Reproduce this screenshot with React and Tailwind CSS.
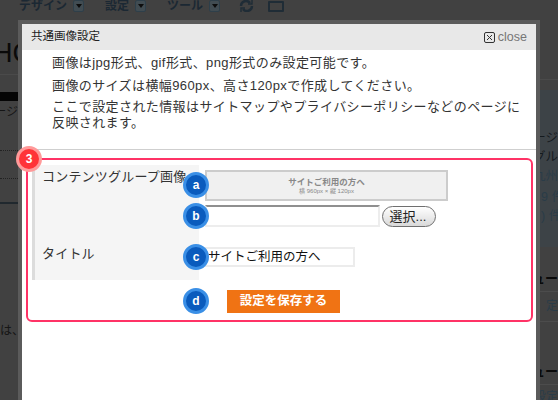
import React from "react";

const jp = `font-['Liberation_Sans','Noto_Sans_CJK_JP',sans-serif]`;

function Badge({ label, className }) {
  return (
    <span className={`absolute left-[155px] flex h-[26px] w-[26px] items-center justify-center rounded-full border-[3px] border-[#3a8fe6] bg-[#0a5bbd] text-[12px] font-bold text-white ${className}`}>
      {label}
    </span>
  );
}

function Menu({ label, className }) {
  return (
    <div className={`flex items-center ${className}`}>
      <span className="text-[12px] font-bold leading-none text-[#1b2833]">{label}</span>
      <span className="ml-[6px] flex h-[12px] w-[11px] items-center justify-center rounded-[2px] border border-[#2e3f4a] bg-[#414c52]">
        <svg width="6" height="4" viewBox="0 0 6 4"><path d="M0 0h6L3 4z" fill="#0d0d0d" /></svg>
      </span>
    </div>
  );
}

function RightLine({ children, className = "" }) {
  return <div className={`flex justify-end whitespace-nowrap ${className}`}>{children}</div>;
}

export default function App() {
  return (
    <div className={`relative h-[400px] w-[558px] overflow-hidden bg-[#414141] ${jp}`}>
      {/* dimmed page behind the dialog */}
      <div className="flex h-[12px] items-center pl-[19px]">
        <Menu label="デザイン" />
        <Menu label="設定" className="ml-[21px]" />
        <Menu label="ツール" className="ml-[21px]" />
        <svg className="ml-[19px]" width="15" height="12" viewBox="0 0 15 12" fill="none" stroke="#1f2c36" strokeWidth="2.4">
          <path d="M2 6a5 5 0 0 1 9-3M13 6a5 5 0 0 1-9 3" />
          <path d="M9 4h4V0M6 8H2v4" strokeWidth="1.4" />
        </svg>
        <span className="ml-[14px] h-[11px] w-[16px] rounded-[1px] border-2 border-[#1f2c36]" />
      </div>

      <div className="flex h-[388px] justify-between">
        <div className="w-[18px] overflow-hidden">
          <div className="-ml-[7px] mt-[26px] h-[30px] whitespace-nowrap text-[27px] leading-[30px] text-[#0a0a0a]">HC</div>
          <div className="mt-[6px] h-[10px] border-t border-[#4a4a4a]" />
          <div className="mt-[8px] h-[9px] bg-[#050505]" />
          <div className="mt-[4px] flex h-[15px] justify-end whitespace-nowrap text-[12px] leading-[15px] text-[#151515]">ページ</div>
          <div className="mt-[30px] border-t border-dotted border-[#222]" />
          <div className="mt-[27px] border-t border-dotted border-[#222]" />
          <div className="mt-[23px] border-t-2 border-[#20282e]" />
          <div className="mt-[120px] whitespace-nowrap text-[12px] leading-[15px] text-[#151515]">は、<span className="text-[#6b3c10]">!</span></div>
        </div>

        <div className="w-[18px] overflow-hidden">
          <div className="mt-[67px] border-t border-[#4a4a4a]" />
          <div className="mt-[10px] h-[157px] bg-[#3d4347] pt-[39px] text-[12.5px] leading-[19px]">
            <RightLine className="text-[#151a1e]">ページ</RightLine>
            <RightLine className="text-[#151a1e]">グル</RightLine>
            <RightLine className="text-[#2a3c48]">九州</RightLine>
            <div className="mt-[2px] whitespace-nowrap pl-[1px] text-[#2a3c48]">9 件</div>
            <div className="whitespace-nowrap pl-[1px] text-[#2a3c48]">) 件</div>
          </div>
          <RightLine className="mt-[24px] text-[13px] font-bold leading-[15px] text-[#0a0a0a]">ュー</RightLine>
          <div className="mt-[5px] border-t border-[#4c4c4c]" />
          <RightLine className="mt-[7px] text-[12px] leading-[15px] text-[#2a3c48]">定</RightLine>
          <div className="mt-[7px] border-t border-[#4c4c4c]" />
          <RightLine className="mt-[42px] text-[13px] font-bold leading-[15px] text-[#0a0a0a]">ュー</RightLine>
          <div className="mt-[5px] border-t border-[#4c4c4c]" />
          <RightLine className="mt-[5px] text-[12px] leading-[15px] text-[#2a3c48]">設定</RightLine>
        </div>
      </div>

      {/* dialog */}
      <div className="absolute left-[18px] top-[20px] h-[400px] w-[522px] border-4 border-[#5b5b5b] bg-white">
        <div className="flex h-[26px] items-center justify-between bg-[#e8e8e8] pl-[9px] pr-[9px]">
          <span className="text-[11.5px] leading-none text-[#222]">共通画像設定</span>
          <span className="flex items-center gap-[3px] text-[12.5px] leading-none text-[#777]">
            <svg width="11" height="11" viewBox="0 0 11 11" fill="none" stroke="#333" strokeWidth="1">
              <rect x="0.5" y="0.5" width="10" height="10" rx="1.5" />
              <path d="M3 3l5 5M8 3l-5 5" />
            </svg>
            close
          </span>
        </div>

        <div className="h-[100px] border-b border-[#cfcfcf] pl-[30px] pt-[4px] text-[13px] tracking-[0.4px] text-[#333]">
          <p className="h-[17px] leading-[17px]">画像はjpg形式、gif形式、png形式のみ設定可能です。</p>
          <p className="mt-[6px] h-[17px] leading-[17px]">画像のサイズは横幅960px、高さ120pxで作成してください。</p>
          <p className="mt-[5px] h-[16px] leading-[16px]">ここで設定された情報はサイトマップやプライバシーポリシーなどのページに</p>
          <p className="h-[15px] leading-[15px]">反映されます。</p>
        </div>

        <div className="relative ml-[4px] mt-[8px] h-[164px] w-[507px] rounded-[6px] border-2 border-[#ff3366] pl-[4px] pt-[5px]">
          <span className="absolute -left-[12px] -top-[14px] flex h-[26px] w-[26px] items-center justify-center rounded-full border-[3px] border-[#ff9a9a] bg-[#ff3338] text-[12px] font-bold text-white">3</span>
          <Badge label="a" className="top-[12px]" />
          <Badge label="b" className="top-[43px]" />
          <Badge label="c" className="top-[84px]" />
          <Badge label="d" className="top-[128px]" />

          <div className="flex h-[115px]">
            <div className="w-[167px] border-l-[3px] border-[#dcdcdc] bg-[#f5f5f5] pl-[7px] text-[13px] tracking-[0.2px] text-[#333]">
              <div className="mt-[3px] whitespace-nowrap leading-[18px]">コンテンツグループ画像</div>
              <div className="mt-[59px] leading-[18px]">タイトル</div>
            </div>
            <div className="pl-[6px] pt-[5px]">
              <div className="flex h-[31px] w-[243px] flex-col items-center justify-center border-2 border-[#cccccc] bg-[#f0f0f0] text-[#888]">
                <span className="text-[8.5px] font-bold leading-[11px]">サイトご利用の方へ</span>
                <span className="text-[6px] leading-[7px]">横 960px × 縦 120px</span>
              </div>
              <div className="mt-[4px] flex items-start gap-[2px]">
                <div className="h-[22px] w-[175px] border-2 border-[#ededed] border-t-[#8f8f8f]" />
                <button className="mt-[1px] h-[21px] w-[54px] rounded-full border-[1.5px] border-[#6f6f6f] bg-gradient-to-b from-white to-[#d9d9d9] pr-[2px] text-[13px] leading-none text-[#222]">選択...</button>
              </div>
              <div className="mt-[20px] flex h-[20px] w-[150px] items-center border-2 border-[#ececec] pl-[1px] text-[12.5px] text-[#111]">サイトご利用の方へ</div>
            </div>
          </div>

          <button className="ml-[195px] mt-[10px] block h-[23px] w-[113px] bg-[#f07314] text-[12.5px] font-bold leading-none text-white">設定を保存する</button>
        </div>
      </div>
    </div>
  );
}
